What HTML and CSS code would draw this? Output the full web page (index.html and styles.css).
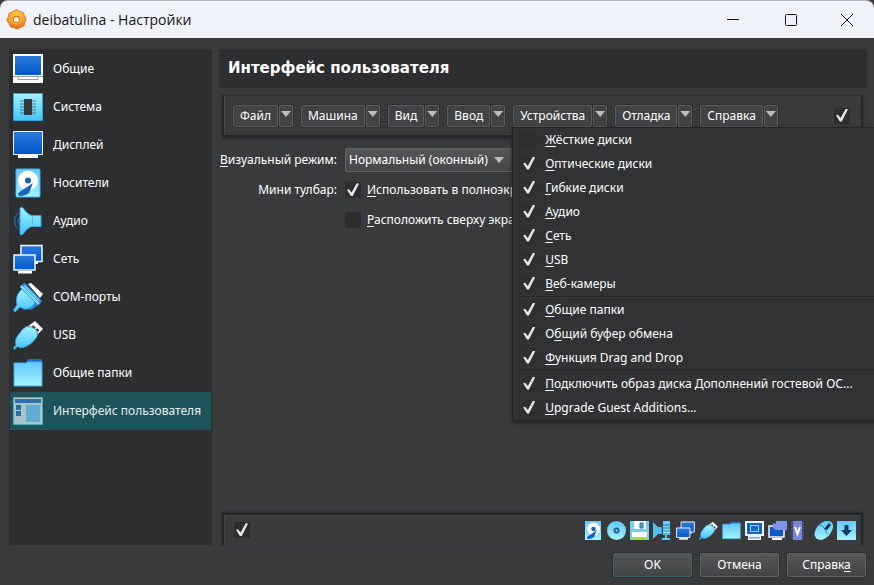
FILE: index.html
```html
<!DOCTYPE html>
<html lang="ru">
<head>
<meta charset="utf-8">
<title>deibatulina - Настройки</title>
<link rel="stylesheet" href="styles.css">
</head>
<body>
<svg class="defs" aria-hidden="true">
  <defs>
    <linearGradient id="blue" x1="0" y1="0" x2="0" y2="1"><stop offset="0" stop-color="#2d7ad9"/><stop offset="1" stop-color="#0056cb"/></linearGradient>
    <linearGradient id="cyan" x1="0" y1="0" x2="0" y2="1"><stop offset="0" stop-color="#62c7fb"/><stop offset="1" stop-color="#a5f3ff"/></linearGradient>
    <linearGradient id="ice" x1="0" y1="0" x2="0" y2="1"><stop offset="0" stop-color="#a4f2ff"/><stop offset="1" stop-color="#43c3f9"/></linearGradient>
    <linearGradient id="gear" x1="0" y1="0" x2="0" y2="1"><stop offset="0" stop-color="#ffd344"/><stop offset="1" stop-color="#f06a1e"/></linearGradient>
    <symbol id="disk" viewBox="0 0 30 30">
      <rect x="3" y="1" width="24" height="28" rx="1" fill="url(#cyan)" stroke="#3bb1ee"/>
      <circle cx="15" cy="12.500" r="10" fill="#fff"/><circle cx="15" cy="12.500" r="3" fill="#1e62b8"/>
      <path d="M20 15L16 25Q11 29 5 27.500Q4.500 25 8 23Z" fill="#1763c4"/>
    </symbol>
    <symbol id="disk-small" viewBox="0 0 19 19">
      <path d="M1 0h16v19H1z" fill="url(#cyan)"/>
      <circle cx="9.500" cy="8" r="6.500" fill="#fff"/><circle cx="9.500" cy="8" r="2.300" fill="#1e62b8"/>
      <path d="M13 9L10 16Q6 19 3 17.500Q3 15 6 14Z" fill="#1763c4"/>
    </symbol>
    <symbol id="nets" viewBox="0 0 30 30">
      <path d="M8 1.500h21v16H8z" fill="url(#blue)" stroke="#eef6ff" stroke-width="1.500"/><path d="M21 18h4v2h-4z" fill="#fff"/>
      <path d="M1 11h21v15H1z" fill="url(#blue)" stroke="#eef6ff" stroke-width="1.500"/><path d="M5 27h14v2.500H5z" fill="#fff"/>
    </symbol>
    <symbol id="plug" viewBox="0 0 30 30">
      <path d="M22 1L30 9L23 16L14 7Z" fill="#f3f4f6"/><path d="M19.500 6l2.500 2.500M23.500 9l2 2" stroke="#333" stroke-width="2"/>
      <path d="M13.500 6.500Q19 6 22 9Q26 13 23.500 17.500Q19 24 13 26.500Q8 29 4.500 26.500L1.500 29.500L.5 28L3 25Q1 20 6 14Q9 9 13.500 6.500Z" fill="url(#ice)" stroke="#3a9fdf"/>
    </symbol>
    <symbol id="folder" viewBox="0 0 30 30">
      <path d="M13 5L15 1H28Q29 1 29 3V10H13Z" fill="#2865c8"/><path d="M1 5H13L15 4H29V28H1Z" fill="url(#cyan)" stroke="#3cb5f3"/>
    </symbol>
  </defs>
</svg>

<div class="window">
  <header class="titlebar">
    <svg class="app-icon" viewBox="0 0 20 20" aria-hidden="true">
      <path d="M8 2Q10 .2 12 2L13.500 2.600Q16.500 2.500 16.900 5L17.500 7Q20 9 18.500 11L17.600 13Q18 16 15.500 16.800L13.500 17.500Q11 20 9 18.300L7 17.500Q4 17.800 3.500 15L2.700 13Q.3 11 1.700 8.700L2.500 7Q2.300 4 5 3.400Z" fill="url(#gear)" stroke="#e47928"/>
      <circle cx="10" cy="10" r="4.700" fill="#ffbd3c"/><circle cx="10" cy="10" r="3" fill="#fff0d0" stroke="#c47024"/>
    </svg>
    <h1 class="window-title">deibatulina - Настройки</h1>
    <div class="window-controls">
      <button type="button" aria-label="Свернуть"><svg viewBox="0 0 14 14"><path d="M1 6.500h12"/></svg></button>
      <button type="button" aria-label="Развернуть"><svg viewBox="0 0 14 14"><rect x="1.500" y="1.500" width="11" height="11" rx="1"/></svg></button>
      <button type="button" aria-label="Закрыть"><svg viewBox="0 0 14 14"><path d="M1 1l12 12M13 1L1 13"/></svg></button>
    </div>
  </header>

  <div class="content">
    <nav class="sidebar" aria-label="Разделы">
      <a class="section" href="#general"><svg viewBox="0 0 30 30"><path d="M0 0h30v29H0z" fill="#fff"/><path d="M2 2h26v19H2z" fill="url(#blue)"/><path d="M0 22.500h30M5 23v2.500h20V23" fill="none" stroke="#999"/></svg>Общие</a>
      <a class="section" href="#system"><svg viewBox="0 0 30 30"><path d="M.5 1.500h29v27H.5z" fill="url(#ice)" stroke="#2fa4da"/><path d="M7 9h16M7 12h16M7 15h16M7 18h16M7 21h16" stroke="#447993"/><path d="M11 7h8v16h-8z" fill="#34393d"/></svg>Система</a>
      <a class="section" href="#display"><svg viewBox="0 0 30 30"><path d="M.5 1.500h29v23H.5z" fill="url(#blue)" stroke="#f0f6ff"/><path d="M5 25h20v3H5z" fill="#fff"/></svg>Дисплей</a>
      <a class="section" href="#storage"><svg><use href="#disk"/></svg>Носители</a>
      <a class="section" href="#audio"><svg viewBox="0 0 30 30"><path d="M5 7Q-2 15 5 23M7 11Q3 15 7 19" fill="none" stroke="#245e96" stroke-width="1.500"/><path d="M7 2Q8 .5 10 2Q15 9 19 9.500H28V20.500H19Q15 21 10 28Q8 30 7 28Z" fill="url(#ice)" stroke="#36a4df"/><path d="M19.500 10v10" stroke="#5cc1e9"/></svg>Аудио</a>
      <a class="section" href="#network"><svg><use href="#nets"/></svg>Сеть</a>
      <a class="section" href="#serial"><svg viewBox="0 0 30 30"><path d="M15 2L18 1L30 12L27 16Z" fill="#fff"/><path d="M9 2L12 1L29 19L27 22L18 28L15 27Z" fill="#2c83d7"/><path d="M12 3L27 18L24 21L8 7Z" fill="#6fcdf8"/><path d="M7 9L10 7L22 19L21 22Q17 28 11 27L7 25L2 30L.5 28L4 23Q2 15 7 9Z" fill="url(#ice)" stroke="#3a9ee4"/><path d="M7 5L9 3L27 21L25 23Z" fill="#83dafa" stroke="#3a9ee4"/></svg>COM-порты</a>
      <a class="section" href="#usb"><svg><use href="#plug"/></svg>USB</a>
      <a class="section" href="#folders"><svg><use href="#folder"/></svg>Общие папки</a>
      <a class="section selected" href="#interface" aria-current="page"><svg viewBox="0 0 30 30"><path d="M.5 1.500h29v27H.5z" fill="#a8c4cc" stroke="#5fa5ba"/><path d="M2 3h26v4H2z" fill="#3470aa"/><path d="M3 9h5v5H3zM3 15h5v5H3z" fill="#286ba5"/><path d="M13 9h14v17H13z" fill="#5fadd1"/></svg>Интерфейс пользователя</a>
    </nav>

    <main class="page">
      <h2 class="page-title">Интерфейс пользователя</h2>

      <div class="menubar">
        <div class="menu-group"><button type="button">Файл</button><button type="button" class="drop" aria-label="Меню Файл"></button></div>
        <div class="menu-group"><button type="button">Машина</button><button type="button" class="drop" aria-label="Меню Машина"></button></div>
        <div class="menu-group"><button type="button">Вид</button><button type="button" class="drop" aria-label="Меню Вид"></button></div>
        <div class="menu-group"><button type="button">Ввод</button><button type="button" class="drop" aria-label="Меню Ввод"></button></div>
        <div class="menu-group">
          <button type="button">Устройства</button><button type="button" class="drop" aria-label="Меню Устройства" aria-expanded="true"></button>
          <div class="popup">
            <label><input type="checkbox"><span><u>Ж</u>ёсткие диски</span></label>
            <label><input type="checkbox" checked><span><u>О</u>птические диски</span></label>
            <label><input type="checkbox" checked><span><u>Г</u>ибкие диски</span></label>
            <label><input type="checkbox" checked><span><u>А</u>удио</span></label>
            <label><input type="checkbox" checked><span><u>С</u>еть</span></label>
            <label><input type="checkbox" checked><span><u>U</u>SB</span></label>
            <label><input type="checkbox" checked><span><u>В</u>еб-камеры</span></label>
            <hr>
            <label><input type="checkbox" checked><span><u>О</u>бщие папки</span></label>
            <label><input type="checkbox" checked><span>О<u>б</u>щий буфер обмена</span></label>
            <label><input type="checkbox" checked><span><u>Ф</u>ункция Drag and Drop</span></label>
            <hr>
            <label><input type="checkbox" checked><span><u>П</u>одключить образ диска Дополнений гостевой ОС...</span></label>
            <label><input type="checkbox" checked><span><u>U</u>pgrade Guest Additions...</span></label>
          </div>
        </div>
        <div class="menu-group"><button type="button">Отладка</button><button type="button" class="drop" aria-label="Меню Отладка"></button></div>
        <div class="menu-group"><button type="button">Справка</button><button type="button" class="drop" aria-label="Меню Справка"></button></div>
        <input class="bar-toggle" type="checkbox" checked aria-label="Показывать меню">
      </div>

      <form class="options">
        <label class="caption" for="mode"><u>В</u>изуальный режим:</label>
        <div class="select-box"><select id="mode"><option>Нормальный (оконный)</option></select></div>
        <span class="caption">Мини тулбар:</span>
        <label class="option"><input type="checkbox" checked><span><u>И</u>спользовать в полноэкранном</span></label>
        <label class="option second"><input type="checkbox"><span><u>Р</u>асположить сверху экрана</span></label>
      </form>

      <div class="statusbar">
        <input type="checkbox" checked aria-label="Показывать строку состояния">
        <div class="indicators">
          <button type="button" aria-label="Жёсткие диски"><svg><use href="#disk-small"/></svg></button>
          <button type="button" aria-label="Оптические диски"><svg viewBox="0 0 19 19"><circle cx="9.500" cy="9.500" r="9.500" fill="url(#cyan)"/><circle cx="9.500" cy="9.500" r="3" fill="#175fa8"/><circle cx="9.500" cy="9.500" r="1" fill="#d7f3ff"/></svg></button>
          <button type="button" aria-label="Гибкие диски"><svg viewBox="0 0 19 19"><path d="M0 0h19v19H0z" fill="#6fd0fa"/><path d="M4 0h12v8H4z" fill="#f6fcff"/><path d="M10 2h3v5h-3z" fill="#55aee0" stroke="#24709f"/><path d="M2 11h15v8H2z" fill="#fff"/><path d="M2 16h15v3H2z" fill="#a2e22f"/></svg></button>
          <button type="button" aria-label="Аудио"><svg viewBox="0 0 19 19"><path d="M0 1l5 5h4v7H5l-5 5z" fill="#56bfee"/><path d="M10 0h7v14h-7z" fill="url(#cyan)"/><path d="M8 4h10M8 7h10M8 10h10M8 13h10" stroke="#226c9f"/><path d="M13 14v4M9 18h8" stroke="#5cc8f5" stroke-width="2"/></svg></button>
          <button type="button" aria-label="Сеть"><svg><use href="#nets"/></svg></button>
          <button type="button" aria-label="USB"><svg><use href="#plug"/></svg></button>
          <button type="button" aria-label="Общие папки"><svg><use href="#folder"/></svg></button>
          <button type="button" aria-label="Дисплей"><svg viewBox="0 0 19 19"><path d="M0 0h19v15h-3v4H3v-4H0z" fill="#e8f4ff"/><path d="M2 2h15v11H2z" fill="#1761bb"/><path d="M5.500 4.500h8v6h-8z" fill="#1c65c3" stroke="#8bd8ff"/><path d="M4 16h11v1.500H4z" fill="#93a9b8"/></svg></button>
          <button type="button" aria-label="Запись"><svg viewBox="0 0 19 19"><path d="M1 5h15v11H1z" fill="#0e59bd" stroke="#f2f7ff" stroke-width="1.500"/><path d="M4 17h10v2H4z" fill="#fff"/><path d="M8 0h11v9H8l-3-2V2l3 1z" fill="#7f93ed"/></svg></button>
          <button type="button" aria-label="Функции процессора"><svg viewBox="0 0 19 19"><path d="M0 2h13M0 5h13M0 8h13M0 11h13M0 14h13M0 17h13" stroke="#5967b7"/><path d="M2 0h9v19H2z" fill="#7486dd"/><path d="M4 6l2.500 7L9 6" fill="none" stroke="#fff" stroke-width="2"/></svg></button>
          <button type="button" aria-label="Мышь"><svg viewBox="0 0 19 19"><path d="M11 0Q20-1 19 7Q16 16 8 19Q0 19 .5 12Q3 3 11 0Z" fill="url(#cyan)"/><path d="M5 4Q11 5 13 13" fill="none" stroke="#2b8cba"/><path d="M15 2l2 2-4 5-3-1z" fill="#17374f"/></svg></button>
          <button type="button" aria-label="Клавиатура"><svg viewBox="0 0 19 19"><path d="M0 0h19v19H0z" fill="url(#cyan)"/><path d="M7.500 4h4v5H15l-5.500 6L4 9h3.500z" fill="#113b6a"/></svg></button>
        </div>
      </div>
    </main>
  </div>

  <footer class="actions">
    <button type="button" class="default">OK</button>
    <button type="button">Отмена</button>
    <button type="button">Справк<u>а</u></button>
  </footer>
</div>
</body>
</html>
```
FILE: styles.css
```css
* { box-sizing: border-box; }

body {
  margin: 0;
  background: #393a3c;
  color: #fff;
  font: 12px/16px "Noto Sans", sans-serif;
}

button, input, select { margin: 0; font: inherit; color: inherit; }
button { padding: 0; }
u { text-underline-offset: 2px; text-decoration-thickness: 1px; }
.defs { position: absolute; width: 0; height: 0; }

.window {
  display: flex;
  flex-direction: column;
  min-height: 100vh;
  overflow: hidden;
}

/* Title bar */
.titlebar {
  display: flex;
  align-items: center;
  height: 38px;
  padding-left: 6px;
  border-top: 1px solid #b4b5b9;
  border-radius: 8px 8px 0 0;
  background: #f0f2fa;
  color: #151515;
}
.app-icon { width: 21px; height: 21px; }
.window-title {
  flex: 1;
  margin: 0 0 0 6px;
  font: 14px/20px "Open Sans", sans-serif;
}
.window-controls { display: flex; }
.window-controls button {
  display: grid;
  place-items: center;
  width: 58px;
  height: 36px;
  border: 0;
  background: none;
}
.window-controls svg { width: 14px; height: 14px; fill: none; stroke: #151515; }
.window-controls button:last-child { width: 54px; }

/* Two columns */
.content {
  flex: 1;
  display: flex;
  gap: 7px;
  padding: 11px 7px 0 9px;
}
.sidebar {
  flex: none;
  width: 203px;
  padding: 1px;
  background: #2d2e30;
}
.section {
  display: flex;
  align-items: center;
  gap: 10px;
  height: 38px;
  padding-left: 3px;
  color: #fff;
  text-decoration: none;
  white-space: nowrap;
}
.section svg { flex: none; width: 30px; height: 30px; }
.selected { background: #1e5459; color: #e5f0f1; }

.page {
  flex: 1;
  display: flex;
  flex-direction: column;
  min-width: 0;
}
.page-title {
  margin: 0;
  padding: 9px;
  background: #2d2e30;
  font: bold 15px/21px "DejaVu Sans", sans-serif;
}

/* Check boxes */
input[type="checkbox"] {
  appearance: none;
  flex: none;
  width: 16px;
  height: 16px;
  background: #2c2d2f;
}
input[type="checkbox"]:checked::before {
  content: "";
  display: block;
  width: 12px;
  height: 13px;
  margin: 1px 2px;
  background: #e6e6e6;
  clip-path: polygon(0 52%, 17% 48%, 38% 74%, 82% 0, 100% 5%, 48% 100%, 31% 100%);
}

/* Menu bar */
.menubar {
  display: flex;
  align-items: center;
  gap: 8px;
  height: 42px;
  margin: 7px 4px 0 3px;
  padding: 1px 11px 0 9px;
  border: solid #242527;
  border-width: 0 2px 2px;
  box-shadow: 0 2px 3px #27282a, inset 0 1px #303133, inset 1px 0 #48494b;
}
.menu-group { position: relative; display: flex; gap: 1px; }
.menu-group > button {
  height: 22px;
  padding: 0 6px;
  border: 1px solid #5a5b5d;
  border-radius: 2px;
  background: #414244;
  box-shadow: 0 0 0 1px #303133;
}
.menu-group > .drop { width: 14px; padding: 0; }
.drop::before, .select-box::after {
  content: "";
  display: block;
  width: 10px;
  height: 6px;
  margin: 0 auto 3px;
  background: #bcbdbd;
  clip-path: polygon(0 0, 100% 0, 50% 100%);
}
.bar-toggle { margin-left: auto; }

.popup {
  position: absolute;
  z-index: 2;
  top: 22px;
  left: -1px;
  width: 370px;
  padding-left: 7px;
  border: 1px solid #232426;
  background: #313234;
  box-shadow: 0 2px 4px #222325;
  white-space: nowrap;
}
.popup label {
  display: flex;
  align-items: center;
  gap: 8px;
  height: 24px;
  padding-left: 1px;
}
.popup input[type="checkbox"] { background: #2e2f31; }
.popup hr {
  height: 2px;
  margin: 0;
  border: 0;
  border-top: 1px solid #252628;
  background: #37383a;
}

/* Settings form */
.options {
  display: grid;
  grid-template-columns: 118px 1fr;
  gap: 6px 8px;
  margin-top: 11px;
  align-items: center;
}
.caption { justify-self: end; white-space: nowrap; }
.select-box { position: relative; justify-self: start; }
.select-box select {
  appearance: none;
  width: 170px;
  height: 24px;
  padding: 0 3px;
  border: 1px solid #626365;
  border-radius: 2px;
  background: linear-gradient(#555658, #464749);
}
.select-box::after { position: absolute; top: 9px; right: 11px; margin: 0; pointer-events: none; }
.option {
  display: flex;
  align-items: center;
  gap: 6px;
  height: 24px;
  white-space: nowrap;
}
.second { grid-column: 2; }

/* Status bar */
.statusbar {
  display: flex;
  align-items: center;
  justify-content: space-between;
  height: 32px;
  margin: auto 4px 0 3px;
  padding: 0 5px 0 10px;
  border: solid #242527;
  border-width: 2px 2px 0;
  box-shadow: 0 -1px 2px #27282a, inset 1px 1px #434446;
}
.indicators { display: flex; gap: 4px; }
.indicators button {
  width: 19px;
  height: 19px;
  border: 0;
  background: none;
}
.indicators svg { display: block; width: 19px; height: 19px; }

/* Dialog buttons */
.actions {
  display: flex;
  justify-content: flex-end;
  gap: 8px;
  padding: 8px 8px 8px;
}
.actions button {
  width: 79px;
  height: 24px;
  border: 1px solid #616264;
  border-radius: 2px;
  background: linear-gradient(#545557, #434446);
  box-shadow: 0 0 0 1px #2e2f31;
}
.actions .default { border-color: #3d6466; }
```
